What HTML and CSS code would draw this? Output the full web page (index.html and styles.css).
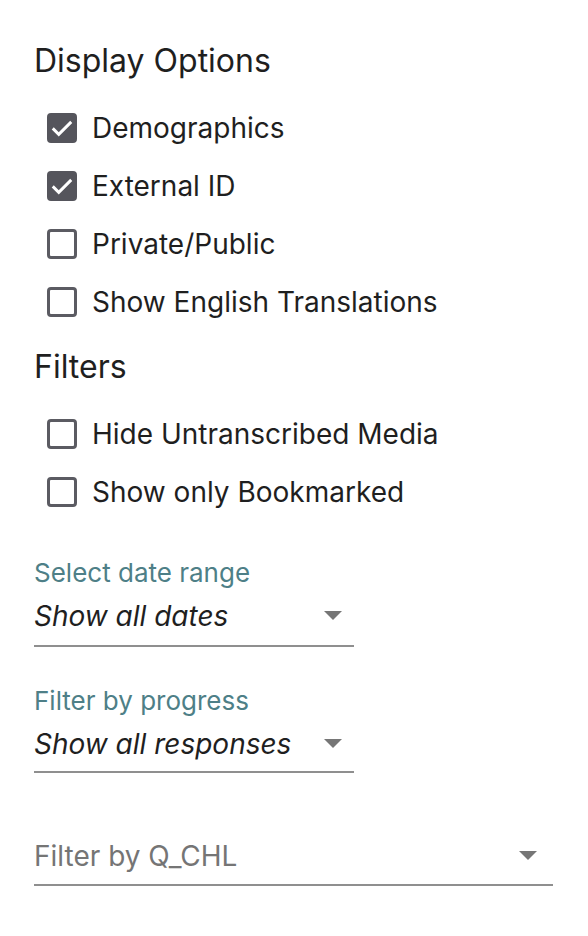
FILE: index.html
```html
<!DOCTYPE html>
<html lang="en">

<head>
  <meta charset="UTF-8">
  <meta name="viewport" content="width=device-width, initial-scale=1.0">
  <title>Options</title>
  <link rel="stylesheet" href="styles.css">
</head>

<body>
  <div class="panel">
    <h2 class="section-title">Display Options</h2>
    <div class="option-list">
      <label class="option">
        <span class="box checked">
          <svg viewBox="0 0 24 24"><path d="M4.6 12.3l4.8 4.8 10-10" /></svg>
        </span>
        <span class="option-text">Demographics</span>
      </label>
      <label class="option">
        <span class="box checked">
          <svg viewBox="0 0 24 24"><path d="M4.6 12.3l4.8 4.8 10-10" /></svg>
        </span>
        <span class="option-text">External ID</span>
      </label>
      <label class="option">
        <span class="box"></span>
        <span class="option-text">Private/Public</span>
      </label>
      <label class="option">
        <span class="box"></span>
        <span class="option-text">Show English Translations</span>
      </label>
    </div>

    <h2 class="section-title">Filters</h2>
    <div class="option-list">
      <label class="option">
        <span class="box"></span>
        <span class="option-text">Hide Untranscribed Media</span>
      </label>
      <label class="option">
        <span class="box"></span>
        <span class="option-text">Show only Bookmarked</span>
      </label>
    </div>

    <div class="field first">
      <div class="field-label">Select date range</div>
      <div class="select">
        <span class="select-value">Show all dates</span>
        <span class="arrow"></span>
      </div>
    </div>

    <div class="field second">
      <div class="field-label">Filter by progress</div>
      <div class="select">
        <span class="select-value">Show all responses</span>
        <span class="arrow"></span>
      </div>
    </div>

    <div class="field wide">
      <div class="select">
        <span class="select-placeholder">Filter by Q_CHL</span>
        <span class="arrow"></span>
      </div>
    </div>
  </div>
</body>

</html>
```

FILE: styles.css
```css
body {
  margin: 0;
  background: #fff;
  font-family: Inter, "Noto Sans", sans-serif;
  color: #1f1f1f;
}

.panel {
  padding: 41px 0 0 34px;
}

.section-title {
  margin: 0;
  font-size: 32px;
  font-weight: 400;
  line-height: 40px;
  color: #1f1f1f;
}

.option-list {
  display: flex;
  flex-direction: column;
  padding: 18px 0 16px 13px;
}

.option {
  display: flex;
  align-items: center;
  gap: 15px;
  height: 58px;
}

.box {
  box-sizing: border-box;
  width: 30px;
  height: 30px;
  border: 3px solid #5b5b62;
  border-radius: 4px;
  display: flex;
  align-items: center;
  justify-content: center;
}

.box.checked {
  background: #55555c;
  border-color: #55555c;
}

.box svg {
  width: 30px;
  height: 30px;
  flex: none;
  fill: none;
  stroke: #fff;
  stroke-width: 2.3;
}

.option-text {
  font-size: 28px;
  line-height: 34px;
}

.field {
  width: 320px;
}

.field.first {
  margin-top: 21px;
}

.field.second {
  margin-top: 39px;
}

.field.wide {
  width: 519px;
  margin-top: 55px;
}

.field-label {
  font-size: 26px;
  line-height: 30px;
  color: #4e7f87;
}

.select {
  display: flex;
  align-items: center;
  justify-content: space-between;
  padding: 12px 12px 13px 0;
  border-bottom: 2px solid #8f8f8f;
}

.second .select {
  padding-bottom: 11px;
}

.wide .select {
  padding: 12px 16px 12px 0;
}

.select-value {
  font-size: 28px;
  font-style: italic;
  line-height: 32px;
}

.select-placeholder {
  font-size: 28px;
  line-height: 32px;
  color: #757575;
}

.arrow {
  width: 0;
  height: 0;
  border-left: 9px solid transparent;
  border-right: 9px solid transparent;
  border-top: 9px solid #767676;
  margin-top: -2px;
}
```
